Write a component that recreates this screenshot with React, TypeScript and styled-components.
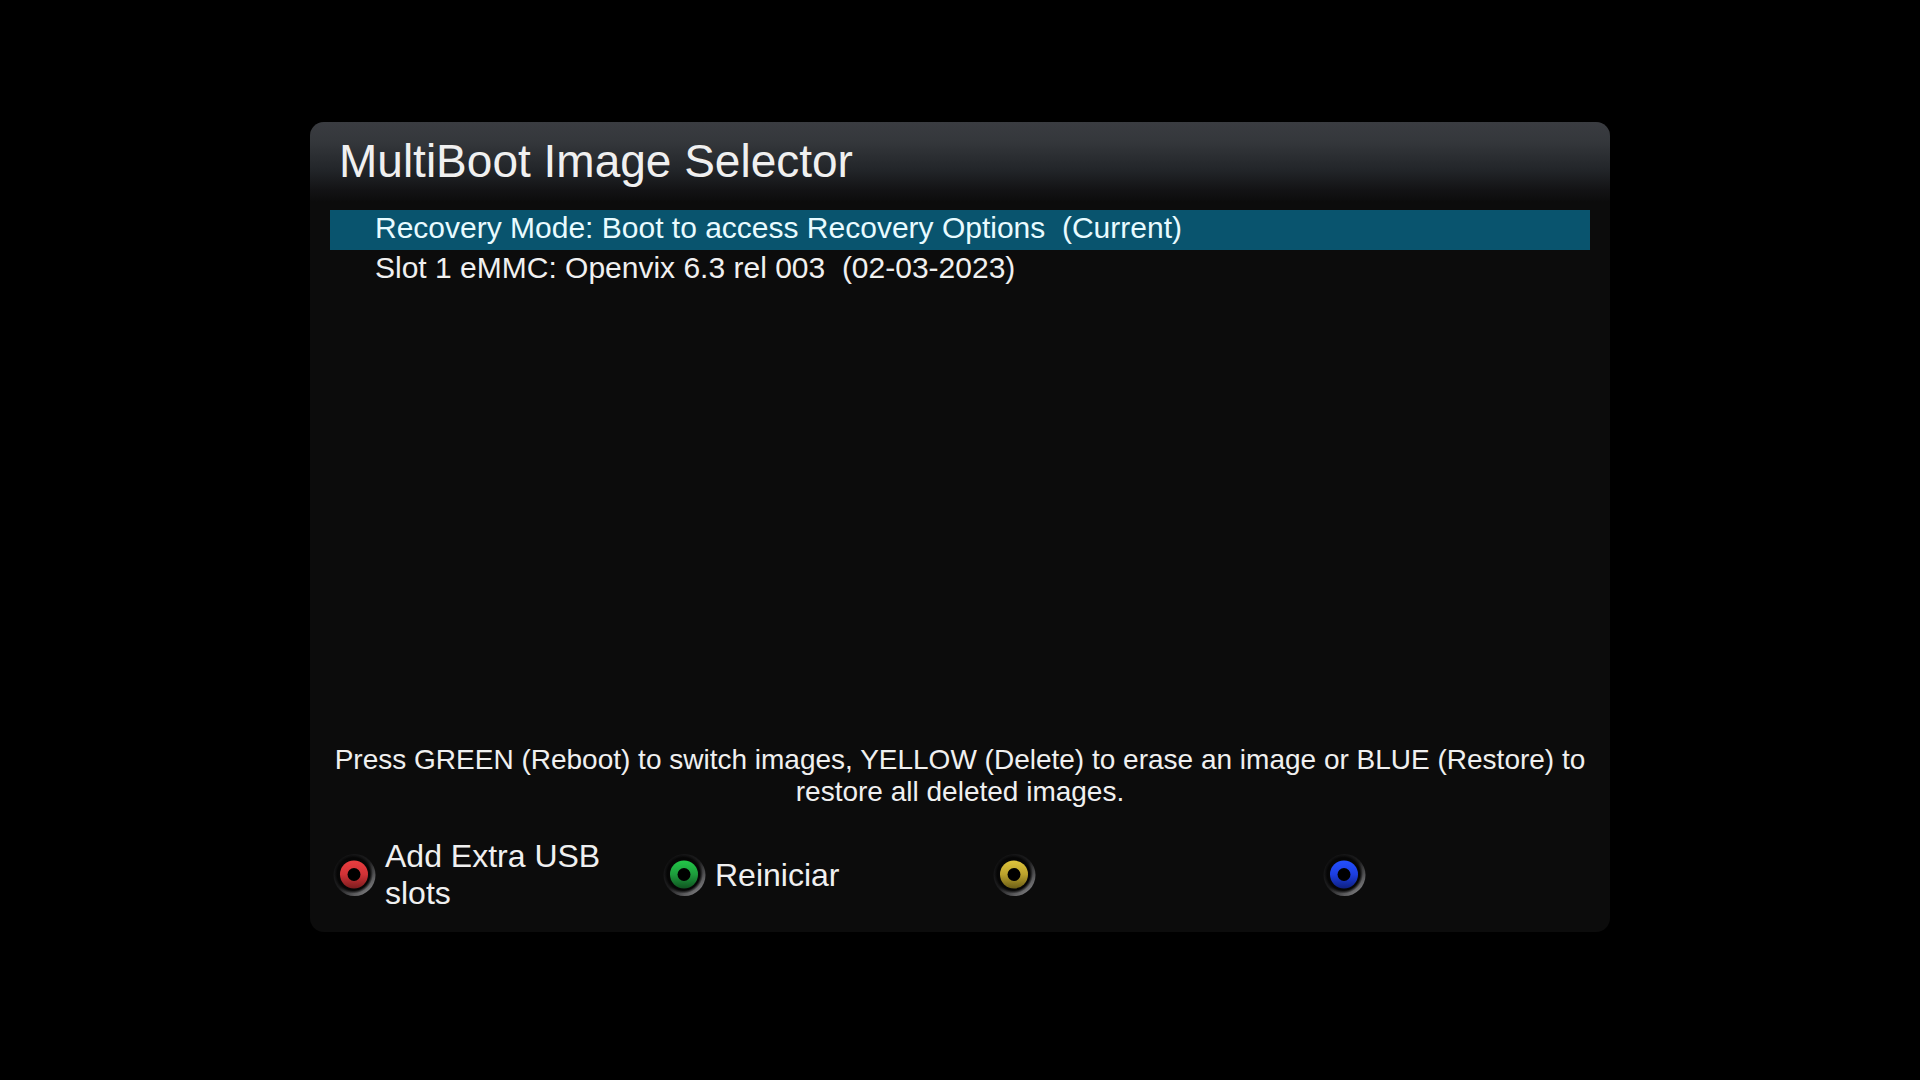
import React, { useState } from "react";
import styled, { createGlobalStyle } from "styled-components";

const GlobalStyle = createGlobalStyle`
  *, *::before, *::after { box-sizing: border-box; }
  body {
    margin: 0;
    background: #000;
    color: #f0f0f0;
    font-family: "Liberation Sans", Arial, sans-serif;
  }
`;

const Screen = styled.main`
  display: flex;
  justify-content: center;
  min-height: 100vh;
  padding: 122px 20px 20px;
`;

const Panel = styled.section`
  display: flex;
  flex-direction: column;
  align-self: flex-start;
  width: 100%;
  max-width: 1300px;
  min-height: 75vh;
  border-radius: 14px;
  overflow: hidden;
  background: #0c0c0c;
`;

const Header = styled.header`
  padding: 11px 29px 13px;
  background: linear-gradient(#3a3c41 0%, #34373b 25%, #222529 60%, #131315 85%, #0c0c0c 100%);
`;

const Title = styled.h1`
  margin: 0;
  font-size: 46px;
  font-weight: 400;
  line-height: 56px;
`;

const ImageList = styled.ul`
  flex: 1;
  margin: 0;
  padding: 8px 20px;
  list-style: none;
`;

const ImageRow = styled.button<{ $selected: boolean }>`
  display: block;
  width: 100%;
  padding: 0 45px 4px;
  border: 0;
  background: ${(p) => (p.$selected ? "#09546e" : "transparent")};
  color: ${(p) => (p.$selected ? "#e8fbff" : "#f0f0f0")};
  font-family: inherit;
  font-size: 30px;
  line-height: 36px;
  text-align: left;
  white-space: pre-wrap;
`;

const Help = styled.p`
  margin: 0;
  padding: 0 16px;
  font-size: 28px;
  line-height: 32px;
  text-align: center;
`;

const KeyBar = styled.footer`
  display: grid;
  grid-template-columns: repeat(4, 1fr);
  column-gap: 40px;
  align-items: center;
  min-height: 116px;
  margin-top: 8px;
  padding-left: 20px;
`;

const KeyButton = styled.button`
  display: flex;
  align-items: center;
  gap: 7px;
  padding: 0;
  border: 0;
  background: transparent;
  color: inherit;
  font-family: inherit;
  font-size: 32px;
  line-height: 37px;
  text-align: left;
`;

const KeyLabel = styled.span`
  max-width: 230px;
  padding-top: 2px;
`;

const KeyIcon = styled.svg`
  flex: none;
  width: 48px;
  height: 48px;
`;

type KeyProps = { name: string; light: string; mid: string; dark: string; label?: string };

const keys: KeyProps[] = [
  { name: "Red", light: "#ea3e40", mid: "#d03236", dark: "#7c1c1e", label: "Add Extra USB slots" },
  { name: "Green", light: "#22c848", mid: "#1d9c3c", dark: "#0f5420", label: "Reiniciar" },
  { name: "Yellow", light: "#dfc43c", mid: "#bba22c", dark: "#6c5e16" },
  { name: "Blue", light: "#2450ff", mid: "#1c3ee0", dark: "#0e2080" },
];

function ColourKey({ name, light, mid, dark, label }: KeyProps) {
  return (
    <KeyButton type="button" aria-label={label ?? name}>
      <KeyIcon viewBox="0 0 48 48" aria-hidden="true">
        <defs>
          <linearGradient id={`rim-${name}`} x1="0.15" y1="0.1" x2="0.85" y2="0.9">
            <stop offset="0" stopColor="#131314" />
            <stop offset="0.5" stopColor="#1c1c1d" />
            <stop offset="0.75" stopColor="#4c4c4e" />
            <stop offset="1" stopColor="#7c7c7e" />
          </linearGradient>
          <linearGradient id={`face-${name}`} x1="0" y1="0" x2="0" y2="1">
            <stop offset="0" stopColor={light} />
            <stop offset="0.5" stopColor={mid} />
            <stop offset="1" stopColor={dark} />
          </linearGradient>
          <radialGradient id={`well-${name}`}>
            <stop offset="0.84" stopColor="#060606" />
            <stop offset="1" stopColor="#060606" stopOpacity="0" />
          </radialGradient>
        </defs>
        <circle cx="24.5" cy="25" r="21" fill={`url(#rim-${name})`} />
        <circle cx="23.5" cy="24" r="19.5" fill={`url(#well-${name})`} />
        <circle cx="24" cy="24.5" r="14" fill={`url(#face-${name})`} />
        <circle cx="24" cy="24.5" r="6.5" fill="#000" />
      </KeyIcon>
      {label && <KeyLabel>{label}</KeyLabel>}
    </KeyButton>
  );
}

const images = [
  "Recovery Mode: Boot to access Recovery Options  (Current)",
  "Slot 1 eMMC: Openvix 6.3 rel 003  (02-03-2023)",
];

export default function App() {
  const [selected, setSelected] = useState(0);
  return (
    <>
      <GlobalStyle />
      <Screen>
        <Panel>
          <Header>
            <Title>MultiBoot Image Selector</Title>
          </Header>
          <ImageList>
            {images.map((image, i) => (
              <li key={image}>
                <ImageRow
                  type="button"
                  $selected={i === selected}
                  aria-pressed={i === selected}
                  onClick={() => setSelected(i)}
                >
                  {image}
                </ImageRow>
              </li>
            ))}
          </ImageList>
          <Help>
            Press GREEN (Reboot) to switch images, YELLOW (Delete) to erase an image or BLUE
            (Restore) to restore all deleted images.
          </Help>
          <KeyBar>
            {keys.map((key) => (
              <ColourKey key={key.name} {...key} />
            ))}
          </KeyBar>
        </Panel>
      </Screen>
    </>
  );
}
